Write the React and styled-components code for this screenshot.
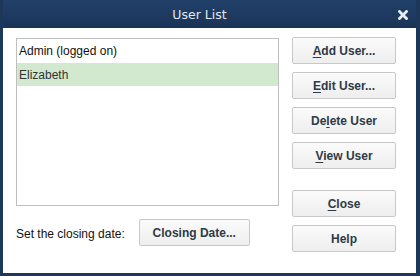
import React from "react";
import styled, { createGlobalStyle } from "styled-components";

const Global = createGlobalStyle`
  html, body { margin: 0; padding: 0; background: #1c375a; }
  body { font-family: "Liberation Sans", Arial, sans-serif; }
`;

const Window = styled.div`
  width: 420px;
  height: 276px;
  box-sizing: border-box;
  background: #1c375a;
  padding: 0 4px 3px 3px;
  display: flex;
  flex-direction: column;
`;

const TitleBar = styled.div`
  height: 28px;
  flex: none;
  position: relative;
  display: flex;
  align-items: center;
  justify-content: center;
  padding-right: 20px;
  background: linear-gradient(#21406a, #1a3457);
  color: #e4e8ee;
  font-family: "DejaVu Sans", "Liberation Sans", sans-serif;
  font-size: 12.5px;
`;

const CloseX = styled.span`
  position: absolute;
  right: 8px;
  top: 10px;
  width: 10px;
  height: 10px;
  display: flex;
`;

const Body = styled.div`
  flex: 1;
  background: #fff;
  display: flex;
  padding: 10px 20px 0 13px;
  gap: 13px;
`;

const LeftCol = styled.div`
  width: 263px;
  display: flex;
  flex-direction: column;
`;

const List = styled.div`
  height: 168px;
  box-sizing: border-box;
  border: 1px solid #bfbfbf;
  background: #fff;
  display: flex;
  flex-direction: column;
`;

const Row = styled.div`
  height: ${(p) => (p.$tall ? 24 : 23)}px;
  display: flex;
  align-items: center;
  padding-left: 2px;
  font-size: 12px;
  color: ${(p) => (p.$selected ? "#333" : "#111")};
  background: ${(p) => (p.$selected ? "#d2e8cf" : "transparent")};
`;

const DateRow = styled.div`
  margin-top: 13px;
  display: flex;
  align-items: center;
  gap: 14px;
`;

const Label = styled.span`
  font-size: 12px;
  color: #111;
  padding-top: 2px;
`;

const RightCol = styled.div`
  margin-top: -1px;
  width: 104px;
  display: flex;
  flex-direction: column;
  gap: 8px;
`;

const Button = styled.button`
  width: ${(p) => p.$w || 104}px;
  height: 27px;
  box-sizing: border-box;
  border: 1px solid #c8c8c8;
  border-radius: 2px;
  background: linear-gradient(#fbfbfb, #eeeeee);
  font-family: "Liberation Sans", Arial, sans-serif;
  font-weight: bold;
  font-size: 12px;
  color: #2e3a48;
  padding: 0;
  margin-top: ${(p) => p.$mt || 0}px;
  u { text-decoration: underline; text-underline-offset: 2px; }
`;

export default function App() {
  return (
    <>
      <Global />
      <Window>
        <TitleBar>
          User List
          <CloseX>
            <svg width="10" height="10" viewBox="0 0 10 10">
              <path d="M1.5 1.5 L8.5 8.5 M8.5 1.5 L1.5 8.5" stroke="#e8ecf0" strokeWidth="2.8" strokeLinecap="square" />
            </svg>
          </CloseX>
        </TitleBar>
        <Body>
          <LeftCol>
            <List>
              <Row $tall>Admin (logged on)</Row>
              <Row $selected>Elizabeth</Row>
            </List>
            <DateRow>
              <Label>Set the closing date:</Label>
              <Button $w={111}>Closing Date...</Button>
            </DateRow>
          </LeftCol>
          <RightCol>
            <Button><u>A</u>dd User...</Button>
            <Button><u>E</u>dit User...</Button>
            <Button>De<u>l</u>ete User</Button>
            <Button><u>V</u>iew User</Button>
            <Button $mt={13}><u>C</u>lose</Button>
            <Button>Help</Button>
          </RightCol>
        </Body>
      </Window>
    </>
  );
}
